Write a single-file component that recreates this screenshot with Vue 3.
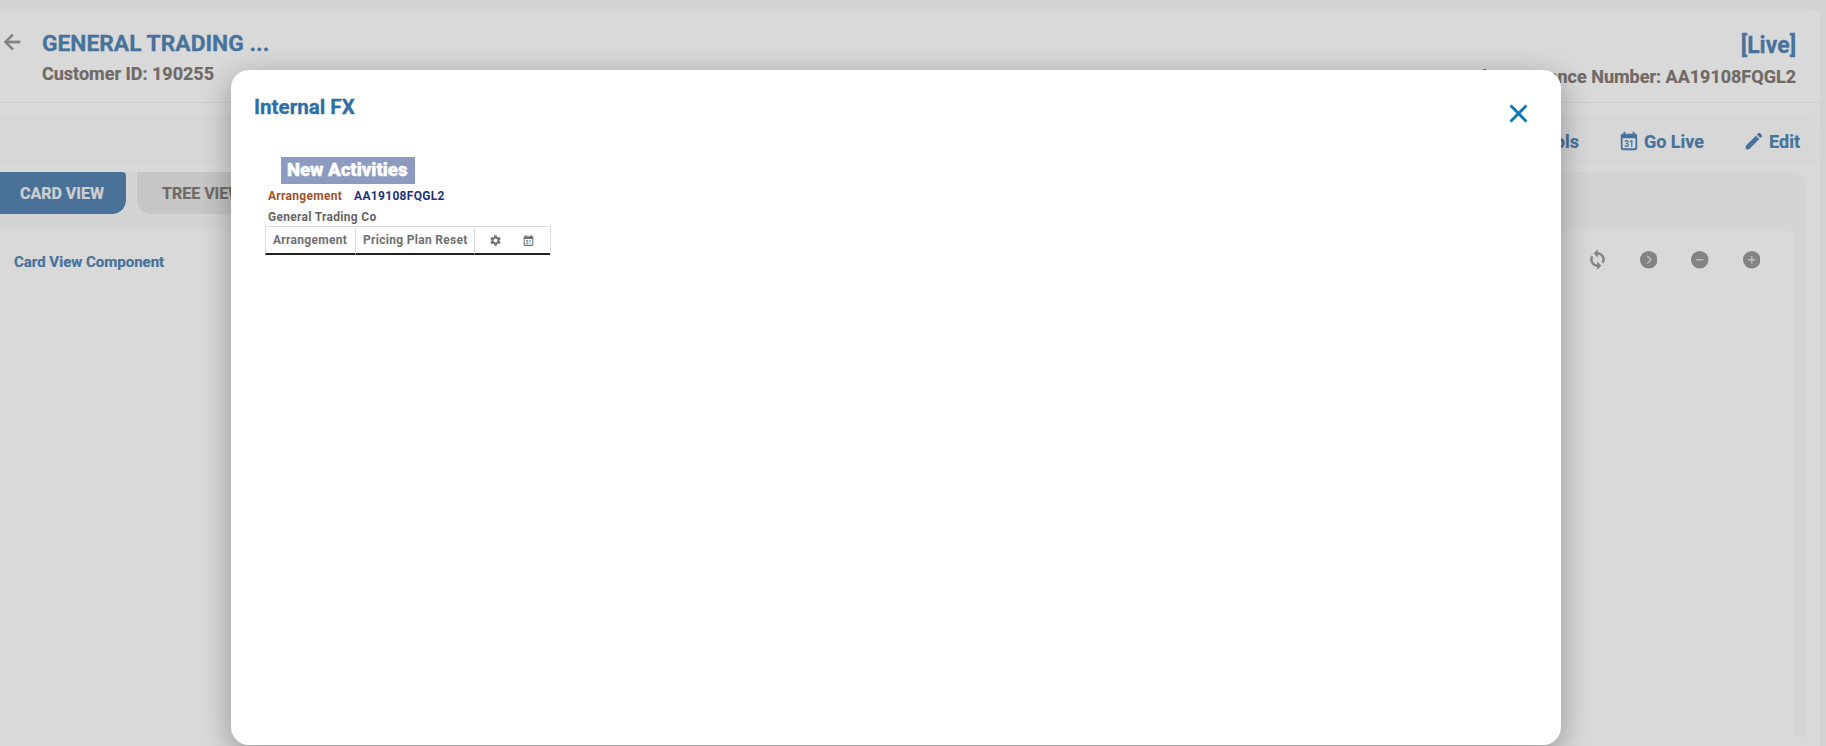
<template>
  <div class="page">
    <section class="card">
      <header class="head">
        <svg class="back" viewBox="0 0 24 24"><path d="M20 11H7.800l5.600-5.600L12 4l-8 8 8 8 1.400-1.400L7.800 13H20z" /></svg>
        <div class="who">
          <h1>GENERAL TRADING ...</h1>
          <p>Customer ID: 190255</p>
        </div>
        <div class="state">
          <div class="live">[Live]</div>
          <p>Product Instance Number: AA19108FQGL2</p>
        </div>
      </header>

      <div class="toolbar">
        <span class="act">Tools</span>
        <span class="act">
          <svg viewBox="0 0 24 24">
            <path d="M19 4h-1V2h-2v2H8V2H6v2H5a2 2 0 0 0-2 2v14a2 2 0 0 0 2 2h14a2 2 0 0 0 2-2V6a2 2 0 0 0-2-2zm0 16H5V9h14z" />
            <text x="12" y="18.500" text-anchor="middle" font-size="9">31</text>
          </svg>
          Go Live
        </span>
        <span class="act">
          <svg viewBox="0 0 24 24"><path d="M3 17.200V21h3.800L17.800 9.900l-3.700-3.700zM20.700 7a1 1 0 0 0 0-1.400l-2.300-2.300a1 1 0 0 0-1.400 0l-1.800 1.800 3.700 3.700z" /></svg>
          Edit
        </span>
      </div>

      <div class="panel">
        <div class="tabs">
          <button class="tab active">CARD VIEW</button>
          <button class="tab">TREE VIEW</button>
        </div>
        <div class="inner">
          <span class="comp">Card View Component</span>
          <div class="tools">
            <svg class="sync" viewBox="0 0 24 24"><path d="M12 4V1L8 5l4 4V6a6 6 0 0 1 6 6c0 1-.25 1.970-.7 2.800l1.460 1.460A8 8 0 0 0 12 4zm0 14a6 6 0 0 1-6-6c0-1 .25-1.970.7-2.800L5.240 7.740A8 8 0 0 0 12 20v3l4-4-4-4z" /></svg>
            <svg viewBox="0 0 24 24"><circle cx="12" cy="12" r="12" /><path class="mark" d="M10 7l5 5-5 5" /></svg>
            <svg viewBox="0 0 24 24"><circle cx="12" cy="12" r="12" /><path class="mark" d="M7 12h10" /></svg>
            <svg viewBox="0 0 24 24"><circle cx="12" cy="12" r="12" /><path class="mark" d="M7 12h10M12 7v10" /></svg>
          </div>
        </div>
      </div>
    </section>

    <div class="overlay"></div>

    <div class="modal">
      <h2>Internal FX</h2>
      <svg class="close" viewBox="0 0 18 18"><path d="M1.500 1.500l15 15M16.500 1.500l-15 15" /></svg>
      <div class="content">
        <div class="banner">New Activities</div>
        <div class="ref">
          <span class="ref-label">Arrangement</span>
          <span class="ref-id">AA19108FQGL2</span>
        </div>
        <div class="company">General Trading Co</div>
        <div class="grid">
          <div class="cell first">Arrangement</div>
          <div class="cell second">Pricing Plan Reset</div>
          <div class="cell icons">
            <svg viewBox="0 0 24 24"><path d="M19.140 12.940c.04-.3.06-.61.06-.94 0-.32-.02-.64-.07-.94l2.030-1.580a.49.49 0 0 0 .12-.61l-1.920-3.320a.488.488 0 0 0-.59-.22l-2.390.96c-.5-.38-1.030-.7-1.620-.94l-.36-2.540a.484.484 0 0 0-.48-.41h-3.840c-.24 0-.43.17-.47.41l-.36 2.540c-.59.24-1.130.57-1.620.94l-2.390-.96c-.22-.08-.47 0-.59.22L2.740 8.870c-.12.21-.08.47.12.61l2.030 1.580c-.05.3-.09.63-.09.94s.02.64.07.94l-2.030 1.580a.49.49 0 0 0-.12.61l1.920 3.320c.12.22.37.29.59.22l2.390-.96c.5.38 1.030.7 1.620.94l.36 2.540c.05.24.24.41.48.41h3.840c.24 0 .44-.17.47-.41l.36-2.540c.59-.24 1.130-.56 1.620-.94l2.390.96c.22.08.47 0 .59-.22l1.920-3.320c.12-.22.07-.47-.12-.61l-2.010-1.580zM12 15.600A3.600 3.600 0 1 1 12 8.400a3.600 3.600 0 0 1 0 7.200z" /></svg>
            <svg viewBox="0 0 24 24">
              <path d="M19 4h-1V2h-2v2H8V2H6v2H5a2 2 0 0 0-2 2v14a2 2 0 0 0 2 2h14a2 2 0 0 0 2-2V6a2 2 0 0 0-2-2zm0 16H5V9h14z" />
              <text x="12" y="18.500" text-anchor="middle" font-size="9">31</text>
            </svg>
          </div>
        </div>
      </div>
    </div>
  </div>
</template>

<script setup>
</script>

<style>
html,
body {
  margin: 0;
  background: #f7f7f7;
}
</style>

<style scoped>
.page {
  position: relative;
  box-sizing: border-box;
  width: 1826px;
  height: 746px;
  padding: 9px 6px 0 0;
  overflow: hidden;
  background: #f7f7f7;
  font-family: Roboto, "Liberation Sans", sans-serif;
  font-weight: 700;
}

.card {
  height: 737px;
  background: #ffffff;
  border-radius: 0 6px 0 0;
}

.head {
  display: flex;
  align-items: flex-start;
  height: 94px;
  box-sizing: border-box;
  padding: 22px 24px 0 0;
  border-bottom: 1px solid #f2f2f2;
}

.back {
  width: 24px;
  height: 24px;
  margin: -1px 18px 0 0;
  fill: #9a9a9a;
  stroke: #9a9a9a;
  stroke-width: 0.8;
}

.who {
  flex: 1;
}

h1 {
  margin: 0;
  font-size: 22.800px;
  line-height: 26px;
  color: #5487b7;
  -webkit-text-stroke: 0.3px #5487b7;
}

.head p {
  margin: 7px 0 0;
  font-size: 18px;
  line-height: 20px;
  color: #837d78;
  -webkit-text-stroke: 0.2px #837d78;
}

.state {
  margin-top: 2px;
  text-align: right;
}

.state p {
  margin-top: 8px;
}

.live {
  font-size: 23px;
  line-height: 26px;
  color: #5487b7;
  -webkit-text-stroke: 0.3px #5487b7;
}

.toolbar {
  display: flex;
  justify-content: flex-end;
  align-items: center;
  gap: 39px;
  height: 48px;
  margin-top: 14px;
  padding-right: 20px;
  background: #fdfdfd;
  border-radius: 0 10px 10px 0;
}

.act {
  display: flex;
  align-items: center;
  gap: 4px;
  font-size: 18px;
  color: #5487b7;
  -webkit-text-stroke: 0.2px #5487b7;
}

.act svg {
  width: 22px;
  height: 22px;
  fill: #5487b7;
  -webkit-text-stroke: 0;
}

.act text {
  font-family: Roboto, sans-serif;
  font-weight: 700;
}

.panel {
  display: flex;
  flex-direction: column;
  height: 565px;
  margin: 7px 15px 0 0;
  background: #fafafa;
  border-radius: 0 12px 0 0;
}

.tabs {
  display: flex;
  gap: 11px;
  margin-bottom: 17px;
}

.tab {
  width: 126px;
  height: 42px;
  border: 0;
  padding: 0 0 0 25px;
  text-align: left;
  border-radius: 0 4px 14px 14px;
  background: #e9e9e9;
  color: #837d78;
  font: 700 16px Roboto, "Liberation Sans", sans-serif;
  -webkit-text-stroke: 0.2px #837d78;
}

.tab.active {
  padding-left: 20px;
  background: #5786b4;
  color: #f4f4f4;
  border-radius: 0 4px 14px 0;
  -webkit-text-stroke: 0.2px #f4f4f4;
}

.inner {
  flex: 1;
  display: flex;
  justify-content: space-between;
  align-items: flex-start;
  margin-right: 11px;
  padding: 21px 34px 0 14px;
  background: #ffffff;
  border-radius: 0 6px 0 0;
}

.comp {
  font-size: 15px;
  line-height: 20px;
  color: #5487b7;
  -webkit-text-stroke: 0.2px #5487b7;
}

.tools {
  display: flex;
  gap: 34px;
  margin-top: -1px;
}

.tools svg {
  width: 17.500px;
  height: 17.500px;
  fill: #9a9a9a;
}

.tools .sync {
  width: 21px;
  height: 21px;
  margin: -2px -2px 0;
  stroke: #9a9a9a;
  stroke-width: 0.8;
}

.tools .mark {
  fill: none;
  stroke: #dddddd;
  stroke-width: 2;
}

.overlay {
  position: absolute;
  inset: 0;
  background: rgba(0, 0, 0, 0.15);
}

.modal {
  position: absolute;
  left: 231px;
  top: 70px;
  width: 1330px;
  height: 675px;
  padding: 25px 0 0 23px;
  box-sizing: border-box;
  background: #ffffff;
  border-radius: 18px;
  box-shadow: 0 8px 30px rgba(0, 0, 0, 0.32);
}

h2 {
  margin: 0;
  font-size: 20.600px;
  line-height: 24px;
  color: #2f6fa7;
  -webkit-text-stroke: 0.3px #2f6fa7;
}

.close {
  position: absolute;
  top: 34px;
  right: 33px;
  width: 19px;
  height: 19px;
  fill: none;
  stroke: #0a78b4;
  stroke-width: 2.700;
}

.content {
  margin: 38px 0 0 14px;
}

.banner {
  display: inline-block;
  box-sizing: border-box;
  width: 134px;
  height: 27px;
  margin-left: 13px;
  padding-left: 6px;
  line-height: 26px;
  background: #8e9bc1;
  color: #ffffff;
  font-size: 18.500px;
  font-weight: 900;
  white-space: nowrap;
  -webkit-text-stroke: 0.4px #ffffff;
}

.ref {
  display: flex;
  gap: 12px;
  height: 21px;
  margin-top: 1px;
  align-items: center;
  font-size: 12px;
  letter-spacing: 0.3px;
}

.ref-label {
  color: #a5522c;
}

.ref-id {
  color: #1f337a;
}

.company {
  margin-top: 2px;
  font-size: 12px;
  letter-spacing: 0.3px;
  line-height: 18px;
  color: #666666;
}

.grid {
  display: flex;
  width: fit-content;
  height: 29px;
  margin: 0 0 0 -3px;
  box-sizing: border-box;
  border-top: 1px solid #dddddd;
  border-right: 1px solid #dddddd;
  font-size: 12px;
  letter-spacing: 0.3px;
  color: #707070;
}

.cell {
  display: flex;
  align-items: center;
  box-sizing: border-box;
  border-left: 1px solid #dddddd;
  border-bottom: 2px solid #222222;
}

.first {
  width: 90px;
  padding-left: 7px;
}

.second {
  width: 119px;
  padding-left: 7px;
}

.icons {
  width: 76px;
  padding-left: 14px;
  gap: 20px;
}

.icons svg {
  width: 13px;
  height: 13px;
  fill: #707070;
}

.icons text {
  font-family: Roboto, sans-serif;
  font-weight: 700;
}
</style>
